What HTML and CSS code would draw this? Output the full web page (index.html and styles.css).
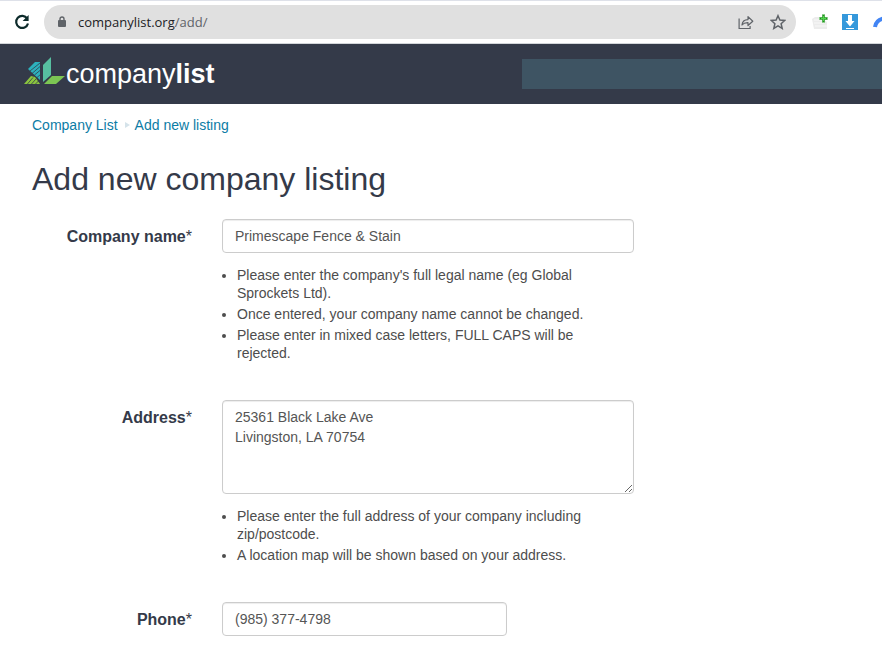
FILE: index.html
```html
<!DOCTYPE html>
<html lang="en">
<head>
    <meta charset="UTF-8">
    <title>Add new company listing</title>
    <meta name="viewport" content="width=device-width, initial-scale=1">
    <link rel="stylesheet" href="styles.css">
</head>
<body>
<!-- browser toolbar -->
<div class="toolbar">
    <button class="icon-btn" type="button" aria-label="Reload">
        <svg width="18" height="18" viewBox="0 0 18 18"><path d="M14.2 5.6A6 6 0 1 0 15 10.4" fill="none" stroke="#0d2b2b" stroke-width="2.2"/><path d="M15.6 2v6H9.6z" fill="#0d2b2b"/></svg>
    </button>
    <div class="omnibox">
        <svg class="lock" width="8" height="12" viewBox="0 0 8 12"><path d="M2 5V3a2 2 0 0 1 4 0v2" fill="none" stroke="#5f6368" stroke-width="1.4"/><rect y="4" width="8" height="7" rx="1" fill="#5f6368"/></svg>
        <div class="url">companylist.org<span>/add/</span></div>
        <button class="icon-btn" type="button" aria-label="Share">
            <svg width="16" height="16" viewBox="0 0 16 16" fill="none" stroke="#5f6368" stroke-width="1.2"><path d="M1.1 4.5v10h11v-2.5"/><path d="M4 11c.3-3.6 2.2-5.3 6-5.4V2.6l4.8 4.6L10 11.5V8.7C7.3 8.6 5.4 9.2 4 11z" stroke-linejoin="round"/></svg>
        </button>
        <button class="icon-btn" type="button" aria-label="Bookmark">
            <svg width="16" height="16" viewBox="0 0 16 16"><path d="M8 1.7l1.9 4.4 4.8.4-3.6 3.2 1.1 4.7L8 11.9l-4.2 2.5 1.1-4.7L1.3 6.5l4.8-.4z" fill="none" stroke="#5f6368" stroke-width="1.5"/></svg>
        </button>
    </div>
    <div class="extensions">
        <button class="icon-btn" type="button" aria-label="Add to list">
            <svg width="16" height="16" viewBox="0 0 16 16"><path d="M0 5l3-2h5l7 5v7H2z" fill="#ececec"/><path d="M2 6h8M2 9h10M3 12h12" stroke="#f8f8f8"/><path d="M11.500 0v9M7 4.500h9" stroke="#8fcf8c" stroke-width="3"/><path d="M11.500 1v7M8 4.500h7" stroke="#1f8f1f" stroke-width="2"/><path d="M11.500 2v5M9 4.500h5" stroke="#4fd84a"/></svg>
        </button>
        <button class="icon-btn" type="button" aria-label="Downloads">
            <svg width="16" height="16" viewBox="0 0 16 16"><path d="M0 0h16v16H0z" fill="#3498db"/><path d="M6 1h4v6h2.500L8 12.500 3.500 7H6zM4 14h8v1H4z" fill="#fff"/></svg>
        </button>
        <button class="icon-btn" type="button" aria-label="Extension">
            <svg width="16" height="16" viewBox="0 0 16 16"><path d="M3 13Q4 5 14 4" fill="none" stroke="#4285f4" stroke-width="4"/></svg>
        </button>
    </div>
</div>

<header class="header">
    <a class="logo" href="#">
        <svg width="42" height="34" viewBox="0 0 42 34">
            <path d="M4 12l7-7h5v18z" fill="#2cb1bd"/>
            <path d="M0 27l7-8 4 1 5 7z" fill="#8bc53f"/>
            <path d="M19 8l8-8v18l-8 7z" fill="#57bfa0"/>
            <path d="M28 19h13l-9 8H20z" fill="#7cc653"/>
            <path d="M6 14l10-8M8 16.500l8-7M10.500 18l6-5M13 20.500l4-3.500M3 27.500l6-7M7 27.500l5-5.500M11 27.500l4-4" stroke="#343a49" stroke-width=".8"/>
        </svg>
        <span>company<b>list</b></span>
    </a>
    <input class="search" type="text" aria-label="Search">
</header>

<main class="content">
    <nav class="breadcrumb">
        <a href="#">Company List</a>
        <i></i>
        <a href="#">Add new listing</a>
    </nav>

    <h1>Add new company listing</h1>

    <form class="form">
        <div class="row">
            <label for="name">Company name<span>*</span></label>
            <div class="field">
                <input id="name" type="text" value="Primescape Fence &amp; Stain">
                <ul>
                    <li>Please enter the company's full legal name (eg Global Sprockets Ltd).</li>
                    <li>Once entered, your company name cannot be changed.</li>
                    <li>Please enter in mixed case letters, FULL CAPS will be rejected.</li>
                </ul>
            </div>
        </div>
        <div class="row">
            <label for="address">Address<span>*</span></label>
            <div class="field">
                <textarea id="address" rows="4">25361 Black Lake Ave
Livingston, LA 70754</textarea>
                <ul>
                    <li>Please enter the full address of your company including zip/postcode.</li>
                    <li>A location map will be shown based on your address.</li>
                </ul>
            </div>
        </div>
        <div class="row">
            <label for="phone">Phone<span>*</span></label>
            <div class="field">
                <input class="short" id="phone" type="text" value="(985) 377-4798">
            </div>
        </div>
    </form>
</main>
</body>
</html>
```

FILE: styles.css
```css
* {
    box-sizing: border-box;
}

body {
    margin: 0;
    background: #fff;
    color: #4d4d4d;
    font-family: "Liberation Sans", Arial, sans-serif;
    font-size: 14px;
    line-height: 18px;
    overflow-x: hidden;
}

/* browser toolbar */
.toolbar {
    display: flex;
    align-items: center;
    height: 44px;
    padding-left: 13px;
    border-top: 1px solid #dee1e9;
    border-bottom: 1px solid #d3d6da;
    overflow: hidden;
}

.icon-btn {
    display: flex;
    flex: none;
    padding: 0;
    border: 0;
    background: none;
}

.omnibox {
    display: flex;
    flex: 1;
    align-items: center;
    gap: 16px;
    height: 34px;
    margin-left: 13px;
    padding: 0 10px 0 14px;
    border-radius: 17px;
    background: #e0e0e0;
}

.lock {
    flex: none;
    margin-right: -4px;
}

.url {
    flex: 1;
    color: #202124;
    font-family: "Open Sans", "Noto Sans", sans-serif;
    font-size: 13px;
}

.url span {
    color: #5f6368;
}

.extensions {
    display: flex;
    gap: 14px;
    width: 86px;
    padding-left: 16px;
}

/* site header */
.header {
    display: grid;
    grid-template-columns: 498px 1fr;
    align-items: center;
    height: 60px;
    padding-left: 24px;
    background: #343a49;
}

.logo {
    display: flex;
    align-items: center;
    color: #fff;
    font-size: 27px;
    line-height: 30px;
    text-decoration: none;
}

.search {
    width: 100%;
    height: 30px;
    padding: 0 12px;
    border: 0;
    background: #3e5463;
    color: #fff;
}

.content {
    padding: 12px 32px 14px;
}

.breadcrumb {
    display: flex;
    align-items: center;
}

.breadcrumb a {
    color: #0c7ca5;
    text-decoration: none;
}

.breadcrumb i {
    margin: 0 5px 0 7px;
    border: 3px solid transparent;
    border-left: 5px solid #d5e3ea;
    border-right: 0;
}

h1 {
    margin: 26px 0 20px;
    color: #343a49;
    font-size: 32px;
    font-weight: normal;
    line-height: 39px;
}

/* form */
.row {
    display: grid;
    grid-template-columns: 160px minmax(0, 412px);
    gap: 30px;
    margin-bottom: 35px;
}

.row:last-child {
    margin-bottom: 0;
}

label {
    padding-top: 8px;
    color: #343a49;
    font-size: 16px;
    font-weight: bold;
    line-height: 20px;
    text-align: right;
}

label span {
    font-weight: normal;
}

.field input,
.field textarea {
    display: block;
    width: 100%;
    height: 34px;
    padding: 6px 12px;
    border: 1px solid #ccc;
    border-radius: 4px;
    background: #fff;
    box-shadow: inset 0 1px 1px rgba(0, 0, 0, .075);
    color: #555;
    font: 14px/20px "Liberation Sans", Arial, sans-serif;
}

.field textarea {
    height: 94px;
    resize: vertical;
}

.field .short {
    width: 285px;
}

.field ul {
    margin: 13px 0 0;
    padding: 0 40px 0 15px;
}

.field li {
    margin-bottom: 3px;
}
```
